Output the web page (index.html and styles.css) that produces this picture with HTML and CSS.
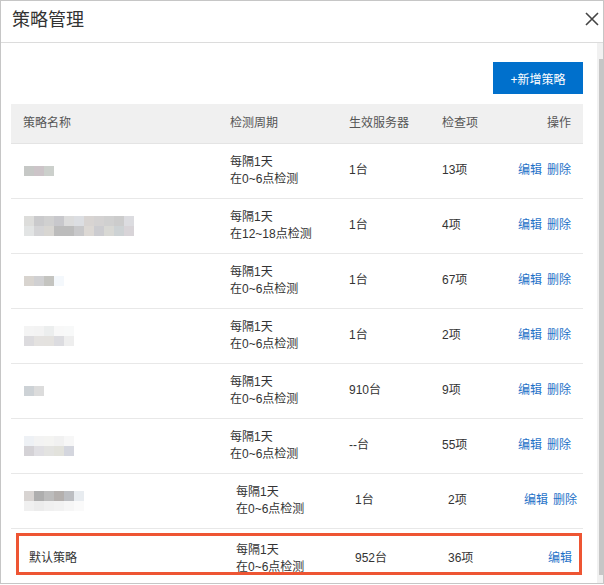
FILE: index.html
```html
<!DOCTYPE html>
<html lang="zh">
<head>
  <meta charset="UTF-8">
  <meta name="viewport" content="width=device-width, initial-scale=1.0">
  <title>策略管理</title>
  <link rel="stylesheet" href="styles.css">
</head>
<body>

<div class="dialog">
  <div class="dialog-header">
    <h3>策略管理</h3>
    <span class="close">
      <svg width="14" height="14" viewBox="0 0 14 14"><path d="M1 1L13 13M13 1L1 13" stroke="#444" stroke-width="1.6" fill="none"/></svg>
    </span>
  </div>

  <div class="dialog-body">
    <div class="toolbar">
      <button class="btn-add">+新增策略</button>
    </div>

    <table class="policy-table">
      <colgroup>
        <col style="width: 207px;">
        <col style="width: 119px;">
        <col style="width: 93px;">
        <col style="width: 70px;">
        <col style="width: 83px;">
      </colgroup>
      <thead>
        <tr>
          <th>策略名称</th>
          <th>检测周期</th>
          <th>生效服务器</th>
          <th>检查项</th>
          <th class="ops">操作</th>
        </tr>
      </thead>
      <tbody>
        <tr>
          <td class="name">
            <div class="mosaic">
              <div class="mosaic-row"><span style="background:#c6c8c6"></span><span style="background:#ccc4c8"></span><span style="background:#ccd0cc"></span></div>
            </div>
          </td>
          <td>每隔1天<br>在0~6点检测</td>
          <td>1台</td>
          <td>13项</td>
          <td class="ops"><a>编辑</a><a>删除</a></td>
        </tr>
        <tr>
          <td class="name">
            <div class="mosaic">
              <div class="mosaic-row"><span style="background:#dddddb"></span><span style="background:#cacacc"></span><span style="background:#d0d0d0"></span><span style="background:#c8c8cc"></span><span style="background:#dcdcdc"></span><span style="background:#dcdee2"></span><span style="background:#d8d4d2"></span><span style="background:#d4d2d2"></span><span style="background:#d0d0d0"></span><span style="background:#cccccc"></span><span style="background:#dcdce0"></span></div>
              <div class="mosaic-row"><span style="background:#e2e4e4"></span><span style="background:#d4d4d6"></span><span style="background:#d8d6d2"></span><span style="background:#bcbcbc"></span><span style="background:#bcbcbc"></span><span style="background:#c8c8ca"></span><span style="background:#dcd8d4"></span><span style="background:#ccccd0"></span><span style="background:#d8d8d4"></span><span style="background:#cdd2d4"></span><span style="background:#d8d4d8"></span></div>
            </div>
          </td>
          <td>每隔1天<br>在12~18点检测</td>
          <td>1台</td>
          <td>4项</td>
          <td class="ops"><a>编辑</a><a>删除</a></td>
        </tr>
        <tr>
          <td class="name">
            <div class="mosaic">
              <div class="mosaic-row"><span style="background:#d8d4cf"></span><span style="background:#d0d0d2"></span><span style="background:#c4c4c0"></span><span style="background:#f4f8fc"></span></div>
            </div>
          </td>
          <td>每隔1天<br>在0~6点检测</td>
          <td>1台</td>
          <td>67项</td>
          <td class="ops"><a>编辑</a><a>删除</a></td>
        </tr>
        <tr>
          <td class="name">
            <div class="mosaic">
              <div class="mosaic-row"><span style="background:#f4f4f4"></span><span style="background:#f3f3f3"></span><span style="background:#eceeee"></span><span style="background:#f8f8f8"></span><span style="background:#f8f9f9"></span></div>
              <div class="mosaic-row"><span style="background:#dcdbde"></span><span style="background:#e4e2e0"></span><span style="background:#e4e2df"></span><span style="background:#dcdce0"></span><span style="background:#eeeeee"></span></div>
            </div>
          </td>
          <td>每隔1天<br>在0~6点检测</td>
          <td>1台</td>
          <td>2项</td>
          <td class="ops"><a>编辑</a><a>删除</a></td>
        </tr>
        <tr>
          <td class="name">
            <div class="mosaic">
              <div class="mosaic-row"><span style="background:#cdd2d6"></span><span style="background:#dcdcdc"></span></div>
            </div>
          </td>
          <td>每隔1天<br>在0~6点检测</td>
          <td>910台</td>
          <td>9项</td>
          <td class="ops"><a>编辑</a><a>删除</a></td>
        </tr>
        <tr>
          <td class="name">
            <div class="mosaic">
              <div class="mosaic-row"><span style="background:#eef1f5"></span><span style="background:#f3f3f3"></span><span style="background:#f4f4f2"></span><span style="background:#f1f1f1"></span><span style="background:#f7f7f7"></span></div>
              <div class="mosaic-row"><span style="background:#d4d2d6"></span><span style="background:#e0dfe3"></span><span style="background:#e3e3e1"></span><span style="background:#e2e2dc"></span><span style="background:#d4d6de"></span></div>
            </div>
          </td>
          <td>每隔1天<br>在0~6点检测</td>
          <td>--台</td>
          <td>55项</td>
          <td class="ops"><a>编辑</a><a>删除</a></td>
        </tr>
        <tr class="shifted">
          <td class="name">
            <div class="mosaic">
              <div class="mosaic-row"><span style="background:#d8d4d2"></span><span style="background:#aeaeae"></span><span style="background:#bcbcbc"></span><span style="background:#b4b0ae"></span><span style="background:#bcbec2"></span><span style="background:#e8ecf0"></span></div>
              <div class="mosaic-row"><span style="background:#f0f0f0"></span><span style="background:#ececec"></span><span style="background:#f0f0f0"></span><span style="background:#f2f2f2"></span><span style="background:#f6f6f6"></span><span style="background:#fafafa"></span></div>
            </div>
          </td>
          <td>每隔1天<br>在0~6点检测</td>
          <td>1台</td>
          <td>2项</td>
          <td class="ops"><a>编辑</a><a>删除</a></td>
        </tr>
        <tr class="shifted default-row">
          <td class="label">默认策略</td>
          <td>每隔1天<br>在0~6点检测</td>
          <td>952台</td>
          <td>36项</td>
          <td class="ops"><a>编辑</a></td>
        </tr>
      </tbody>
    </table>
  </div>

  <!-- 标注框 -->
  <div class="highlight"></div>

  <div class="scrollbar"><div class="thumb"></div></div>
</div>

</body>
</html>
```

FILE: styles.css
```css
* {
  margin: 0;
  padding: 0;
  box-sizing: border-box;
}
body {
  font-family: "Liberation Sans", "Noto Sans CJK SC", sans-serif;
  background-color: #fff;
  color: #333;
}
.dialog {
  position: relative;
  width: 604px;
  height: 584px;
  border: 1px solid #c6c6c6;
  overflow: hidden;
  background-color: #fff;
}
.dialog-header {
  display: flex;
  align-items: center;
  justify-content: space-between;
  height: 42px;
  padding: 0 4px 0 11px;
  border-bottom: 1px solid #dcdcdc;
}
.dialog-header h3 {
  font-size: 18px;
  font-weight: normal;
  color: #333;
  line-height: 24px;
  margin-top: -4px;
}
.close {
  display: flex;
  width: 14px;
  height: 14px;
  margin-top: -6px;
}
.dialog-body {
  padding: 19px 20px 0 10px;
}
.toolbar {
  display: flex;
  justify-content: flex-end;
  margin-bottom: 10px;
}
.btn-add {
  width: 90px;
  height: 32px;
  border: none;
  background-color: #0070cc;
  color: #fff;
  font-family: inherit;
  font-size: 12px;
  cursor: pointer;
}
.policy-table {
  width: 572px;
  table-layout: fixed;
  border-collapse: collapse;
  font-size: 12px;
  line-height: 17px;
}
.policy-table th {
  height: 39px;
  padding: 0 12px;
  text-align: left;
  font-weight: normal;
  color: #555;
  background-color: #f0f0f0;
  border-bottom: 1px solid #e4e4e4;
}
.policy-table td {
  height: 55px;
  padding: 0 12px;
  vertical-align: middle;
  border-bottom: 1px solid #e8e8e8;
  white-space: nowrap;
}
.policy-table .ops {
  text-align: right;
}
.policy-table td.ops a {
  color: #1f72c8;
  cursor: pointer;
}
.policy-table td.ops a + a {
  margin-left: 5px;
}
.policy-table td.name {
  padding-left: 13px;
}
.mosaic-row {
  display: flex;
}
.mosaic-row span {
  display: block;
  width: 10px;
  height: 10px;
}
.shifted td {
  padding-left: 18px;
}
.shifted td.ops {
  padding-right: 6px;
}
.default-row td {
  border-bottom: none;
  padding-top: 6px;
}
.default-row td.ops {
  padding-right: 11px;
}
.highlight {
  position: absolute;
  left: 15px;
  top: 532px;
  width: 566px;
  height: 42px;
  border: 3px solid #ee5533;
}
.scrollbar {
  position: absolute;
  right: 0;
  top: 42px;
  bottom: 0;
  width: 6px;
  background-color: #f1f1f1;
}
.scrollbar .thumb {
  position: absolute;
  right: 0;
  top: 16px;
  bottom: 8px;
  width: 4px;
  background-color: #c6c6c6;
}
```
